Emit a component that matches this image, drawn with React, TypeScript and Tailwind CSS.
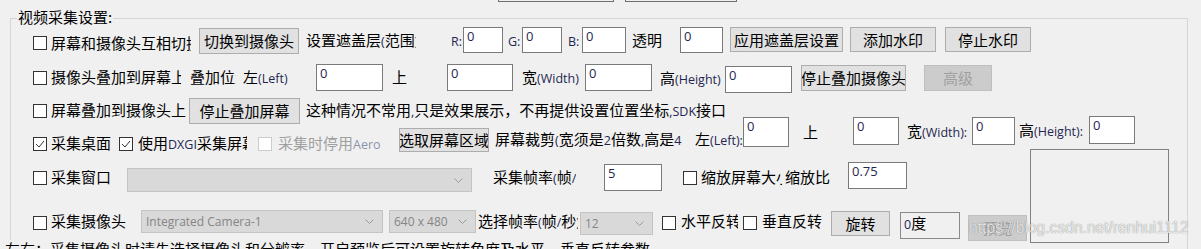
import React from 'react';

type P = { className?: string; children?: React.ReactNode };

const L: React.FC<P> = ({ className, children }) => (
  <span className={`font-['Open_Sans',sans-serif] text-[12.5px] ${className ?? 'text-[#1f2750]'}`}>{children}</span>
);

const Txt: React.FC<P> = ({ className, children }) => (
  <div className={`h-[20px] shrink-0 overflow-hidden whitespace-nowrap text-[15px] leading-[20px] ${className ?? ''}`}>{children}</div>
);

const Check: React.FC<{ checked?: boolean; disabled?: boolean; className?: string }> = ({ checked, disabled, className }) => (
  <div
    className={`flex h-[14px] w-[14px] shrink-0 items-center justify-center border bg-white ${
      disabled ? 'border-[#cccccc]' : 'border-[#333333]'
    } ${className ?? ''}`}
  >
    {checked && (
      <svg width="10" height="10" viewBox="0 0 10 10">
        <polyline points="1,5 4,8 9,2" fill="none" stroke="#333333" strokeWidth="1" />
      </svg>
    )}
  </div>
);

const Btn: React.FC<P & { disabled?: boolean }> = ({ className, children, disabled }) => (
  <div
    className={`flex shrink-0 items-center justify-center overflow-hidden whitespace-nowrap border text-[15px] leading-[20px] ${
      disabled ? 'border-[#bfbfbf] bg-[#cccccc] text-[#a0a0a0]' : 'border-[#adadad] bg-[#e1e1e1] text-black'
    } ${className ?? ''}`}
  >
    {children}
  </div>
);

const Field: React.FC<P> = ({ className, children }) => (
  <div
    className={`shrink-0 border border-[#7a7a7a] bg-white pl-[3px] font-['Open_Sans',sans-serif] text-[13px] leading-[16px] text-[#1f2750] ${className ?? ''}`}
  >
    {children}
  </div>
);

const Chevron = () => (
  <svg width="9" height="5" viewBox="0 0 9 5" className="mr-[8px] shrink-0">
    <polyline points="0.5,0.5 4.5,4.5 8.5,0.5" fill="none" stroke="#9a9a9a" strokeWidth="1" />
  </svg>
);

const Combo: React.FC<{ text?: string; className?: string }> = ({ text, className }) => (
  <div className={`flex shrink-0 items-center border border-[#c4c4c4] bg-[#d9d9d9] ${className ?? ''}`}>
    <span className="flex-1 overflow-hidden whitespace-nowrap pl-[4px] font-['Open_Sans',sans-serif] text-[12px] text-[#858585]">
      {text}
    </span>
    <Chevron />
  </div>
);

export default function App() {
  return (
    <div className="relative h-[249px] w-[1201px] overflow-hidden bg-[#f0f0f0] font-['Noto_Sans_CJK_SC','Noto_Sans',sans-serif] text-black">
      {/* bottom edges of the buttons above */}
      <div className="flex h-[18px] items-start">
        <div className="ml-[498px] h-[2px] w-[116px] border-x border-b border-[#707070]" />
        <div className="ml-[11px] h-[2px] w-[112px] border-x border-b border-[#707070]" />
      </div>

      <div className="ml-[10px] h-[260px] w-[1178px] border-x border-t border-[#d5d5d5]">
        <div className="-mt-[11px] ml-[6px] h-[18px] w-fit bg-[#f0f0f0] px-[1px] text-[15px] leading-[18px]">
          视频采集设置:
        </div>

        {/* row 1 */}
        <div className="mt-[1px] flex h-[37px] items-start">
          <Check className="ml-[22px] mt-[9px]" />
          <Txt className="ml-[4px] mt-[6px] w-[140px]">屏幕和摄像头互相切换</Txt>
          <Btn className="ml-[8px] mt-[1px] h-[26px] w-[100px]">切换到摄像头</Btn>
          <Txt className="ml-[7px] mt-[3px] w-[110px]">
            设置遮盖层<L>(</L>范围<L>)</L>
          </Txt>
          <Txt className="ml-[35px] mt-[3px] w-[12px]">
            <L>R:</L>
          </Txt>
          <Field className="h-[26px] w-[40px]">0</Field>
          <Txt className="ml-[5px] mt-[3px] w-[14px]">
            <L>G:</L>
          </Txt>
          <Field className="h-[26px] w-[40px]">0</Field>
          <Txt className="ml-[6px] mt-[3px] w-[14px]">
            <L>B:</L>
          </Txt>
          <Field className="h-[26px] w-[44px]">0</Field>
          <Txt className="ml-[6px] mt-[3px] w-[30px]">透明</Txt>
          <Field className="ml-[18px] h-[26px] w-[43px]">0</Field>
          <Btn className="ml-[7px] h-[25px] w-[113px]">应用遮盖层设置</Btn>
          <Btn className="ml-[7px] h-[25px] w-[86px]">添加水印</Btn>
          <Btn className="ml-[9px] h-[25px] w-[86px]">停止水印</Btn>
        </div>

        {/* row 2 */}
        <div className="flex h-[34px] items-start">
          <Check className="ml-[22px] mt-[7px]" />
          <Txt className="ml-[4px] mt-[3px] w-[130px]">摄像头叠加到屏幕上</Txt>
          <Txt className="ml-[9px] mt-[3px] w-[46px]">叠加位置</Txt>
          <Txt className="ml-[7px] mt-[3px] w-[60px]">
            左<L>(Left)</L>
          </Txt>
          <Field className="ml-[13px] h-[27px] w-[67px]">0</Field>
          <Txt className="ml-[9px] mt-[3px] w-[15px]">上</Txt>
          <Field className="ml-[40px] h-[27px] w-[66px]">0</Field>
          <Txt className="ml-[9px] mt-[3px] w-[58px]">
            宽<L>(Width)</L>
          </Txt>
          <Field className="ml-[5px] h-[27px] w-[67px]">0</Field>
          <Txt className="ml-[8px] mt-[4px] w-[62px]">
            高<L>(Height)</L>
          </Txt>
          <Field className="ml-[3px] mt-[2px] h-[27px] w-[67px]">0</Field>
          <Btn className="ml-[9px] mt-[1px] h-[26px] w-[105px]">停止叠加摄像头</Btn>
          <Btn disabled className="ml-[18px] mt-[1px] h-[26px] w-[68px]">
            高级
          </Btn>
        </div>

        {/* row 3 */}
        <div className="flex h-[18px] items-start">
          <Check className="ml-[22px] mt-[6px]" />
          <Txt className="ml-[4px] mt-[2px] w-[135px]">屏幕叠加到摄像头上</Txt>
          <Btn className="ml-[3px] h-[26px] w-[111px]">停止叠加屏幕</Btn>
          <Txt className="ml-[6px] mt-[2px]">
            这种情况不常用<L>,</L>只是效果展示，不再提供设置位置坐标<L>,SDK</L>接口
          </Txt>
        </div>

        {/* row 4 */}
        <div className="flex h-[46px] items-start">
          <Check checked className="ml-[22px] mt-[21px]" />
          <Txt className="ml-[4px] mt-[17px] w-[60px]">采集桌面</Txt>
          <Check checked className="ml-[8px] mt-[21px]" />
          <Txt className="ml-[5px] mt-[17px] w-[109px]">
            使用<L>DXGI</L>采集屏幕
          </Txt>
          <Check disabled className="ml-[11px] mt-[21px]" />
          <Txt className="ml-[6px] mt-[17px] w-[105px] text-[#a0a0a0]">
            采集时停用<L className="text-[#8d93b0]">Aero</L>
          </Txt>
          <Btn className="ml-[16px] mt-[12px] h-[24px] w-[90px]">选取屏幕区域</Btn>
          <Txt className="ml-[6px] mt-[13px] w-[187px]">
            屏幕裁剪<L>(</L>宽须是<L>2</L>倍数<L>,</L>高是<L>4</L>的倍数<L>)</L>
          </Txt>
          <Txt className="ml-[13px] mt-[13px] w-[48px]">
            左<L>(Left):</L>
          </Txt>
          <Field className="mt-[1px] h-[30px] w-[46px]">0</Field>
          <Txt className="ml-[14px] mt-[6px] w-[15px]">上</Txt>
          <Field className="ml-[35px] mt-[1px] h-[28px] w-[46px]">0</Field>
          <Txt className="ml-[8px] mt-[5px] w-[62px]">
            宽<L>(Width):</L>
          </Txt>
          <Field className="ml-[3px] mt-[1px] h-[28px] w-[43px]">0</Field>
          <Txt className="ml-[4px] mt-[4px] w-[66px]">
            高<L>(Height):</L>
          </Txt>
          <Field className="ml-[4px] h-[28px] w-[46px]">0</Field>
        </div>

        {/* row 5 */}
        <div className="flex h-[48px] items-start">
          <Check className="ml-[22px] mt-[9px]" />
          <Txt className="ml-[4px] mt-[5px] w-[60px]">采集窗口</Txt>
          <Combo className="ml-[16px] mt-[6px] h-[24px] w-[345px]" />
          <Txt className="ml-[21px] mt-[5px] w-[83px]">
            采集帧率<L>(</L>帧<L>/</L>秒<L>)</L>
          </Txt>
          <Field className="ml-[28px] mt-[2px] h-[27px] w-[58px]">5</Field>
          <Check className="ml-[21px] mt-[9px]" />
          <Txt className="ml-[4px] mt-[5px] w-[81px]">缩放屏幕大小</Txt>
          <Txt className="ml-[3px] mt-[5px] w-[45px]">缩放比</Txt>
          <Field className="ml-[18px] h-[27px] w-[59px]">0.75</Field>
          <div className="-mt-[13px] ml-[123px] h-[94px] w-[139px] shrink-0 border border-[#828282]" />
        </div>

        {/* row 6 */}
        <div className="flex h-[29px] items-start">
          <Check className="ml-[22px] mt-[6px]" />
          <Txt className="ml-[4px] mt-[1px] w-[75px]">采集摄像头</Txt>
          <Combo className="ml-[15px] h-[23px] w-[242px]" text="Integrated Camera-1" />
          <Combo className="ml-[6px] h-[23px] w-[87px]" text="640 x 480" />
          <Txt className="ml-[2px] mt-[1px] w-[100px]">
            选择帧率<L>(</L>帧<L>/</L>秒<L>)</L>
          </Txt>
          <Combo className="ml-[2px] mt-[2px] h-[23px] w-[73px]" text="12" />
          <Check className="ml-[9px] mt-[6px]" />
          <Txt className="ml-[5px] mt-[1px] w-[57px]">水平反转</Txt>
          <Check className="ml-[5px] mt-[6px]" />
          <Txt className="ml-[5px] mt-[1px] w-[60px]">垂直反转</Txt>
          <Btn className="ml-[9px] mt-[1px] h-[25px] w-[59px]">旋转</Btn>
          <div className="ml-[10px] mt-[2px] h-[27px] w-[60px] shrink-0 border border-[#8a8a8a] bg-[#f0f0f0] pl-[3px] text-[15px] leading-[20px]">
            <L>0</L>度
          </div>
          <Btn disabled className="ml-[8px] mt-[5px] h-[26px] w-[59px]">
            预览
          </Btn>
        </div>

        {/* note under the group, partly cut off */}
        <div className="-ml-[8px] mt-[1px] h-[20px] w-[740px] bg-[#f0f0f0] pl-[2px] text-[15px] leading-[18px] whitespace-nowrap">
          左右：采集摄像头时请先选择摄像头和分辨率，开启预览后可设置旋转角度及水平、垂直反转参数
        </div>
      </div>

      <div className="pointer-events-none absolute left-[969px] top-[219px] font-['Liberation_Sans',sans-serif] text-[15.6px] leading-[18px] text-white/80 [text-shadow:0_0_1px_rgba(0,0,0,0.55)]">
        https://blog.csdn.net/renhui1112
      </div>
    </div>
  );
}
